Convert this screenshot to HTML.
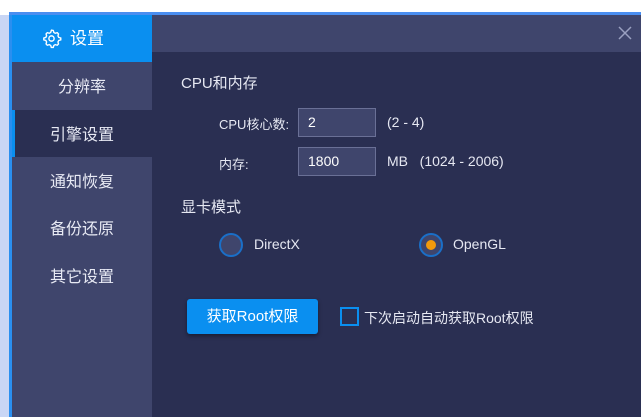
<!DOCTYPE html>
<html><head><meta charset="utf-8"><style>
*{margin:0;padding:0;box-sizing:border-box}
body{width:644px;height:417px;background:#fff;position:relative;overflow:hidden;font-family:"Liberation Sans","Noto Sans CJK SC",sans-serif;color:#e6e8f2}
.a{position:absolute}
.side{left:12px;top:15px;width:140px;height:402px;background:#3f456c}
.item{position:absolute;left:12px;width:140px;height:47px;line-height:51px;text-align:center;font-size:16px;color:#e8eaf4}
.inp{position:absolute;left:298px;width:78px;height:29px;background:#3f456c;border:1px solid #6a7096;font-size:14px;line-height:27px;padding-left:9px;color:#fff}
.lbl{position:absolute;font-size:13px;color:#e6e8f2}
</style></head><body>
<div class="a" style="left:0;top:0;width:644px;height:12px;background:#fff"></div>
<div class="a" style="left:9px;top:12px;width:632px;height:3px;background:#4a8ef0"></div>
<div class="a" style="left:0;top:15px;width:9px;height:402px;background:#c9d6f5"></div>
<div class="a" style="left:9px;top:15px;width:3px;height:402px;background:#2a8ff0"></div>
<div class="a" style="left:12px;top:15px;width:629px;height:402px;background:#2a2f52"></div>
<div class="a" style="left:152px;top:15px;width:489px;height:37px;background:#3f456c"></div>
<div class="a side"></div>
<div class="a" style="left:12px;top:15px;width:140px;height:47px;background:#0a8ff0;font-size:17px;line-height:47px;color:#fff">
<svg class="a" style="left:29px;top:13px" width="21" height="21" viewBox="0 0 24 24" fill="none" stroke="#fff" stroke-width="1.6"><path d="M12 2.5l2 .3.7 2.3 1.6.9 2.3-.7 1.4 1.5-.6 2.3.9 1.6 2.3.7v2.2l-2.3.7-.9 1.6.6 2.3-1.4 1.5-2.3-.7-1.6.9-.7 2.3h-2.200l-.7-2.3-1.6-.9-2.3.7-1.4-1.5.6-2.3-.9-1.6-2.3-.7v-2.2l2.3-.7.9-1.6-.6-2.3 1.4-1.5 2.3.7 1.6-.9.7-2.3z"/><circle cx="12" cy="12" r="3"/></svg>
<span class="a" style="left:58px;top:0">设置</span></div>
<div class="item" style="top:62px">分辨率</div>
<div class="a" style="left:12px;top:110px;width:140px;height:47px;background:#2a2f52"></div>
<div class="a" style="left:12px;top:110px;width:3px;height:47px;background:#0a8ff0"></div>
<div class="item" style="top:110px">引擎设置</div>
<div class="item" style="top:157px">通知恢复</div>
<div class="item" style="top:204px">备份还原</div>
<div class="item" style="top:252px">其它设置</div>
<svg class="a" style="left:618px;top:26px" width="14" height="14" viewBox="0 0 14 14" stroke="#9aa0c0" stroke-width="1.5"><path d="M1 1L13 13M13 1L1 13"/></svg>
<div class="a" style="left:181px;top:72px;font-size:15px">CPU和内存</div>
<div class="lbl" style="left:219px;top:114px">CPU核心数:</div>
<div class="inp" style="top:108px">2</div>
<div class="lbl" style="left:387px;top:114px;font-size:14px">(2 - 4)</div>
<div class="lbl" style="left:219px;top:154px">内存:</div>
<div class="inp" style="top:147px">1800</div>
<div class="lbl" style="left:387px;top:153px;font-size:14px">MB &nbsp;&nbsp;(1024 - 2006)</div>
<div class="a" style="left:181px;top:196px;font-size:15px">显卡模式</div>
<div class="a" style="left:219px;top:233px;width:24px;height:24px;border-radius:50%;background:#3f456c;border:2px solid #1a6fc8"></div>
<div class="lbl" style="left:254px;top:236px;font-size:14px">DirectX</div>
<div class="a" style="left:419px;top:233px;width:24px;height:24px;border-radius:50%;background:#3f456c;border:2px solid #1a6fc8"></div>
<div class="a" style="left:426px;top:240px;width:10px;height:10px;border-radius:50%;background:#f39a0c"></div>
<div class="lbl" style="left:453px;top:236px;font-size:14px">OpenGL</div>
<div class="a" style="left:187px;top:299px;width:131px;height:35px;background:#0a8ff0;border-radius:3px;font-size:15px;line-height:35px;text-align:center;color:#fff;box-shadow:0 2px 4px rgba(0,0,0,.4)">获取Root权限</div>
<div class="a" style="left:340px;top:307px;width:19px;height:19px;border:2px solid #0a8ff0"></div>
<div class="lbl" style="left:364px;top:308px;font-size:14px">下次启动自动获取Root权限</div>
</body></html>
